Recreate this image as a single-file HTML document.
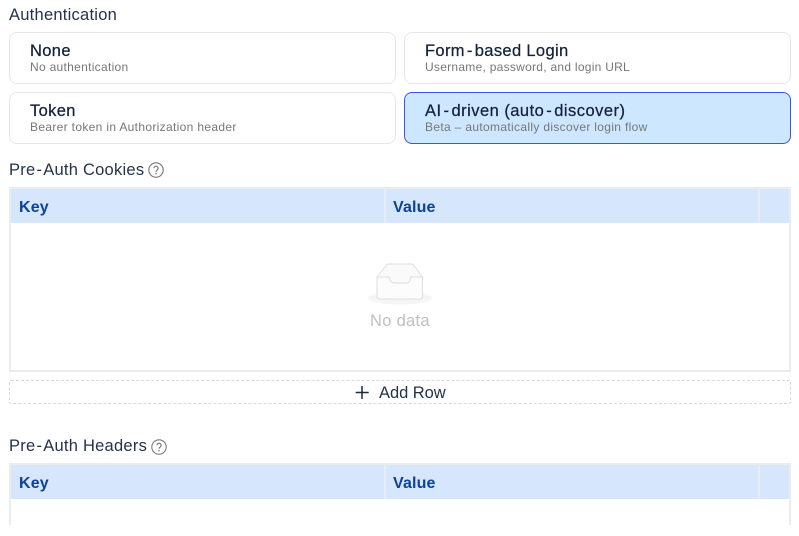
<!DOCTYPE html>
<html><head><meta charset="utf-8">
<style>
html,body{margin:0;padding:0;background:#fff;width:799px;height:536px;overflow:hidden}
body{position:relative;font-family:"Liberation Sans",sans-serif}
.a{position:absolute;white-space:nowrap}
.card{position:absolute;width:385px;height:50px;border:1px solid #e5e7eb;border-radius:8px;background:#fff}
.card.sel{background:#cce7ff;border-color:#3f51f0}
.t{position:absolute;left:20px;top:7.500px;font-size:16.500px;line-height:20px;font-weight:400;color:#14213d;white-space:nowrap;letter-spacing:.35px;-webkit-text-stroke:.25px #14213d}
.t i,.lab i{font-style:normal;margin:0 2px}
.lab i{margin:0 1px}
.s{position:absolute;left:20px;top:26px;font-size:12px;line-height:16px;color:#777;white-space:nowrap;letter-spacing:.3px}
.lab{font-size:16.500px;line-height:20px;color:#25324b;letter-spacing:.25px}
.tbl{position:absolute;left:9px;width:778px;border:2px solid #ebebeb;background:#fff;box-sizing:content-box}
.hd{position:absolute;left:0;top:0;width:100%;height:34px;background:#d6e6fc}
.dv{position:absolute;top:0;width:2px;height:34px;background:#e6edf6}
.th{position:absolute;top:9px;font-size:16px;line-height:20px;font-weight:700;color:#0b429c;letter-spacing:.15px}
</style></head><body>
<div class="a lab" style="left:9px;top:5px">Authentication</div>

<div class="card" style="left:9px;top:32px"><div class="t">None</div><div class="s">No authentication</div></div>
<div class="card" style="left:404px;top:32px"><div class="t">Form<i>-</i>based Login</div><div class="s" style="letter-spacing:.27px">Username, password, and login URL</div></div>
<div class="card" style="left:9px;top:92px"><div class="t">Token</div><div class="s" style="letter-spacing:.33px">Bearer token in Authorization header</div></div>
<div class="card sel" style="left:404px;top:92px"><div class="t" style="letter-spacing:.47px">AI<i>-</i>driven (auto<i>-</i>discover)</div><div class="s" style="letter-spacing:.33px">Beta – automatically discover login flow</div></div>

<div class="a lab" style="left:9px;top:159.500px">Pre<i>-</i>Auth Cookies</div>
<svg class="a" style="left:148px;top:161.500px" width="16" height="16" viewBox="0 0 16 16" fill="none" stroke="#777"><circle cx="8" cy="8" r="7.200" stroke-width="1.100"/><path d="M5.900 6.300a2.100 2.100 0 1 1 3.200 1.800c-.7.4-1.100.8-1.100 1.600" stroke-width="1.200"/><circle cx="8" cy="11.600" r=".75" fill="#777" stroke="none"/></svg>

<div class="tbl" style="top:187px;height:181px">
 <div class="hd"></div>
 <div class="dv" style="left:373px"></div>
 <div class="dv" style="left:747px"></div>
 <div class="th" style="left:8px">Key</div>
 <div class="th" style="left:382px">Value</div>
</div>
<svg class="a" style="left:368px;top:262px" width="64" height="44" viewBox="0 0 64 44" fill="none">
 <ellipse cx="32" cy="36" rx="32" ry="6.500" fill="#f5f5f5"/>
 <path d="M9 15L19 2.500Q19.500 2 20.500 2H43.500Q44.500 2 45 2.500L54.500 15V34Q54.500 37 52 37H11.500Q9 37 9 34Z" fill="#fafafa" stroke="#dedede" stroke-width="1"/>
 <path d="M9 15H19.500Q21.500 15 22 17.500T25.500 21H38.500Q41.500 21 42 17.500T44.500 15H54.500V34Q54.500 37 52 37H11.500Q9 37 9 34Z" fill="#fcfcfc" stroke="#dedede" stroke-width="1"/>
</svg>
<div class="a" style="left:370px;top:311px;font-size:16.500px;line-height:20px;color:#bfbfbf;letter-spacing:.3px">No data</div>

<div class="a" style="left:9px;top:380px;width:780px;height:22px;border:1px dashed #d9d9d9;border-radius:2px"></div>
<svg class="a" style="left:355px;top:385px" width="14" height="14" viewBox="0 0 14 14"><path d="M7 1V14M.7 7.500H13.700" stroke="#1c2942" stroke-width="1.500" fill="none"/></svg>
<div class="a lab" style="left:379px;top:382.500px;letter-spacing:-.05px">Add Row</div>

<div class="a lab" style="left:9px;top:435.500px">Pre<i>-</i>Auth Headers</div>
<svg class="a" style="left:151px;top:438.500px" width="16" height="16" viewBox="0 0 16 16" fill="none" stroke="#777"><circle cx="8" cy="8" r="7.200" stroke-width="1.100"/><path d="M5.900 6.300a2.100 2.100 0 1 1 3.200 1.800c-.7.4-1.100.8-1.100 1.600" stroke-width="1.200"/><circle cx="8" cy="11.600" r=".75" fill="#777" stroke="none"/></svg>

<div class="tbl" style="top:463px;height:80px">
 <div class="hd"></div>
 <div class="dv" style="left:373px"></div>
 <div class="dv" style="left:747px"></div>
 <div class="th" style="left:8px">Key</div>
 <div class="th" style="left:382px">Value</div>
</div>
<div class="a" style="left:0;top:525px;width:799px;height:11px;background:#fff"></div>
</body></html>
